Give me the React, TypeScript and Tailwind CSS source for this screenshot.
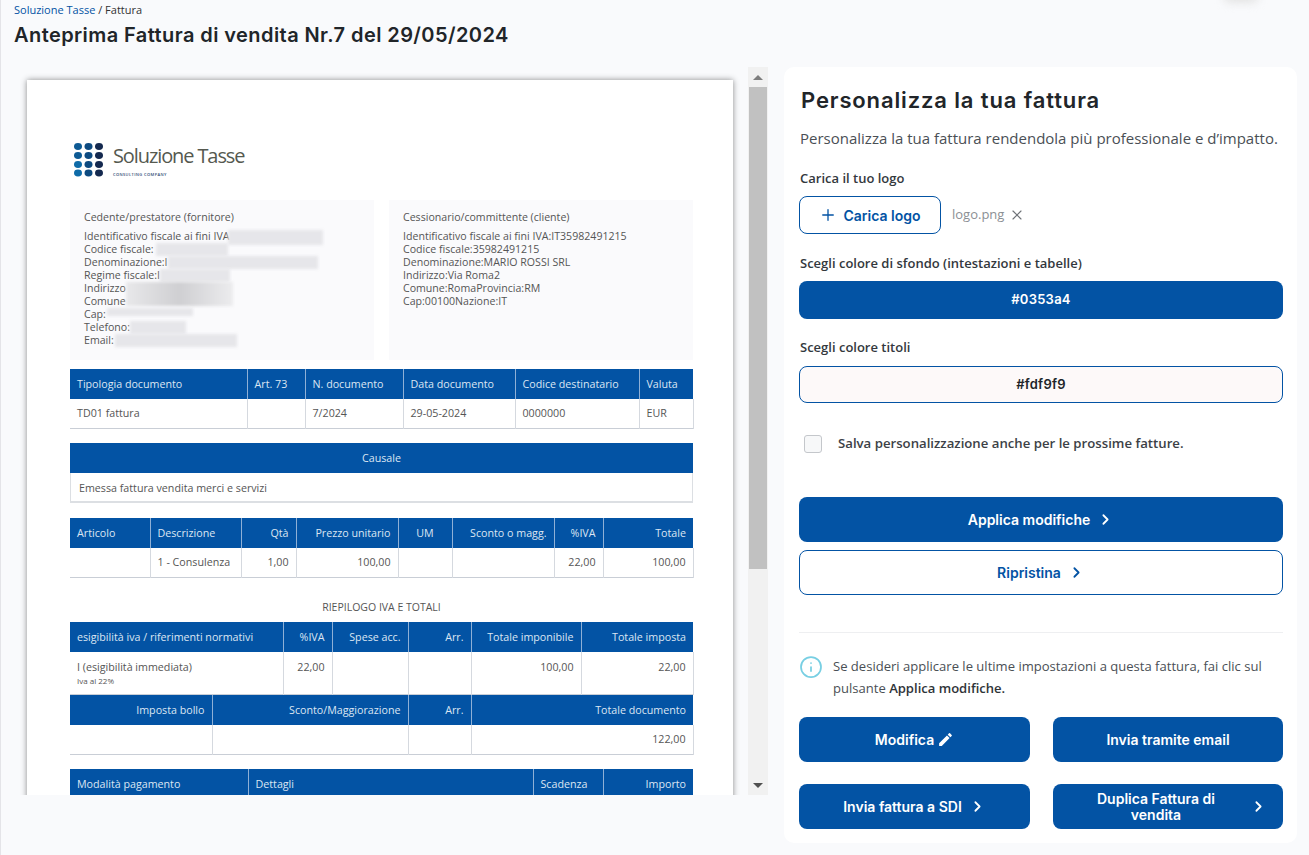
import React from "react";
import { ChevronRight, Plus, X, Info } from "lucide-react";
import { MdEdit } from "react-icons/md";

const sans = "font-['Open_Sans','Liberation_Sans',sans-serif]";
const head = "font-['Inter','Liberation_Sans',sans-serif]";

type Col = { w: number; label: string; cell?: React.ReactNode; right?: boolean; center?: boolean };

function DocTable({ cols, h = 29, extra = false }: { cols: Col[]; h?: number; extra?: boolean }) {
  return (
    <table className="table-fixed border-collapse w-[623px] text-[10.7px] leading-[13px]">
      <colgroup>
        {cols.map((c, i) => (
          <col key={i} style={{ width: c.w }} />
        ))}
      </colgroup>
      <thead>
        <tr className="h-[30px] bg-[#0353a4] text-[#dce6f3]">
          {cols.map((c, i) => (
            <th
              key={i}
              className={`px-[7px] pt-[1px] font-normal whitespace-nowrap border-l border-l-[#8fb0d6] first:border-l-0 ${
                c.right ? "text-right" : c.center ? "text-center" : "text-left"
              }`}
            >
              {c.label}
            </th>
          ))}
        </tr>
      </thead>
      <tbody>
        <tr className="border-b border-b-[#c9ced6] text-[#555]" style={{ height: h }}>
          {cols.map((c, i) => (
            <td
              key={i}
              className={`px-[7px] whitespace-nowrap border-l border-l-[#d5d9df] first:border-l-0 last:border-r last:border-r-[#d5d9df] ${
                extra ? "align-top pt-[9px]" : "pt-[1px]"
              } ${c.right ? "text-right" : "text-left"}`}
            >
              {c.cell}
            </td>
          ))}
        </tr>
      </tbody>
    </table>
  );
}

function Blur({ w, h = 13, shift = 0 }: { w: number; h?: number; shift?: number }) {
  return (
    <span
      className="inline-block align-top bg-[#e6e6ea] blur-[1.5px]"
      style={{ width: w, height: h, marginLeft: shift }}
    />
  );
}

function Dots() {
  const colors = ["#0d5a94", "#0d4a80", "#14294f"];
  const ys = [147, 157, 167, 175];
  return (
    <svg width="32" height="34" viewBox="72 143 32 34" className="shrink-0">
      {ys.map((y, r) =>
        [77, 87.5, 98].map((x, c) => (
          <ellipse
            key={`${r}-${c}`}
            cx={x}
            cy={r === 3 ? 173 : 146.5 + r * 9}
            rx="4"
            ry="3.4"
            fill={r > 1 && c === 0 ? "#0e6ba8" : colors[c]}
          />
        ))
      )}
    </svg>
  );
}

function Btn({
  children,
  outline,
  className = "",
}: {
  children: React.ReactNode;
  outline?: boolean;
  className?: string;
}) {
  return (
    <button
      className={`${head} flex items-center justify-center h-[45px] rounded-[8px] text-[14px] font-semibold ${
        outline ? "bg-white border border-[#0353a4] text-[#0353a4]" : "bg-[#0353a4] text-white"
      } ${className}`}
    >
      {children}
    </button>
  );
}

export default function App() {
  return (
    <div className={`${sans} relative h-[855px] w-[1309px] overflow-hidden bg-[#f9fafc] border-l border-l-[#e4e4e8] text-[#212529]`}>
      <div className="absolute left-[1222px] top-[-12px] h-[15px] w-[36px] rounded-full bg-[#e4e4e4] blur-[4px]" />
      <header className="h-[67px] pl-[13px] pt-[2px]">
        <div className="text-[11px] leading-[15px] text-[#333]">
          <span className="text-[#0353a4]">Soluzione Tasse</span> / Fattura
        </div>
        <h1 className={`${head} mt-[5px] text-[20px] leading-[26px] font-[580] tracking-[0.42px] text-[#212529]`}>
          Anteprima Fattura di vendita Nr.7 del 29/05/2024
        </h1>
      </header>

      <div className="flex items-start">
        <section className="flex w-[767px] h-[728px] overflow-hidden">
          <div className="w-[747px] overflow-hidden pl-[26px] pt-[13px] pr-[14px]">
            <div className="w-[706px] h-[900px] bg-white shadow-[0_0_6px_rgba(0,0,0,0.45)] pl-[43px] pt-[63px] pr-[40px]">
              <div className="flex items-center ml-[3px] h-[34px]">
                <Dots />
                <div className="ml-[8px] -mt-[8px] relative">
                  <div className={`${sans} text-[20px] leading-[24px] tracking-[-1.1px] text-[#55594f] font-normal whitespace-nowrap`}>
                    Soluzione Tasse
                  </div>
                  <div className="absolute left-0 top-[28px] text-[4px] leading-[5px] tracking-[0.4px] text-[#2a4670] font-semibold whitespace-nowrap">
                    CONSULTING COMPANY
                  </div>
                </div>
              </div>

              <div className="flex gap-[15px] mt-[23px] h-[160px] text-[10.6px] leading-[13px] text-[#555]">
                <div className="w-[304px] bg-[#fafafc] pl-[14px] pt-[11px]">
                  <div className="mb-[6px]">Cedente/prestatore (fornitore)</div>
                  <div className="whitespace-nowrap h-[13px]">Identificativo fiscale ai fini IVA<Blur w={95} h={15} shift={-1} /></div>
                  <div className="whitespace-nowrap h-[13px]">Codice fiscale:<Blur w={72} shift={2} /></div>
                  <div className="whitespace-nowrap h-[13px]">Denominazione:I<Blur w={150} /></div>
                  <div className="whitespace-nowrap h-[13px]">Regime fiscale:I<Blur w={70} /></div>
                  <div className="whitespace-nowrap h-[13px]">
                    Indirizzo
                    <span className="inline-block align-top w-[107px] h-[24px] bg-gradient-to-r from-[#e8e8ea] via-[#cfcfd2] to-[#ececee] blur-[1.5px]" />
                  </div>
                  <div className="whitespace-nowrap h-[13px]">Comune</div>
                  <div className="whitespace-nowrap h-[13px]">Cap:<Blur w={86} h={8} shift={1} /></div>
                  <div className="whitespace-nowrap h-[13px]">Telefono:<Blur w={56} /></div>
                  <div className="whitespace-nowrap h-[13px]">Email:<Blur w={122} shift={1} /></div>
                </div>
                <div className="w-[304px] bg-[#fafafc] pl-[14px] pt-[11px]">
                  <div className="mb-[6px]">Cessionario/committente (cliente)</div>
                  <div>Identificativo fiscale ai fini IVA:IT35982491215</div>
                  <div>Codice fiscale:35982491215</div>
                  <div>Denominazione:MARIO ROSSI SRL</div>
                  <div>Indirizzo:Via Roma2</div>
                  <div>Comune:RomaProvincia:RM</div>
                  <div>Cap:00100Nazione:IT</div>
                </div>
              </div>

              <div className="mt-[9px]">
                <DocTable
                  cols={[
                    { w: 177, label: "Tipologia documento", cell: "TD01 fattura" },
                    { w: 58, label: "Art. 73" },
                    { w: 98, label: "N. documento", cell: "7/2024" },
                    { w: 112, label: "Data documento", cell: "29-05-2024" },
                    { w: 124, label: "Codice destinatario", cell: "0000000" },
                    { w: 54, label: "Valuta", cell: "EUR" },
                  ]}
                />
              </div>

              <div className="mt-[14px] w-[623px] text-[10.7px] leading-[13px]">
                <div className="h-[30px] pt-[2px] bg-[#0353a4] text-[#dce6f3] flex items-center justify-center">Causale</div>
                <div className="h-[30px] flex items-center pl-[8px] pt-[3px] text-[#555] border-x border-b-2 border-[#dcdfe3]">
                  Emessa fattura vendita merci e servizi
                </div>
              </div>

              <div className="mt-[15px]">
                <DocTable
                  h={30}
                  cols={[
                    { w: 80, label: "Articolo" },
                    { w: 91, label: "Descrizione", cell: "1 - Consulenza" },
                    { w: 55, label: "Qtà", cell: "1,00", right: true },
                    { w: 102, label: "Prezzo unitario", cell: "100,00", right: true },
                    { w: 54, label: "UM", center: true },
                    { w: 102, label: "Sconto o magg.", right: true },
                    { w: 49, label: "%IVA", cell: "22,00", right: true },
                    { w: 90, label: "Totale", cell: "100,00", right: true },
                  ]}
                />
              </div>

              <div className="w-[623px] h-[44px] pt-[22px] text-center text-[10.5px] leading-[14px] text-[#555]">
                RIEPILOGO IVA E TOTALI
              </div>

              <DocTable
                h={42}
                extra
                cols={[
                  {
                    w: 213,
                    label: "esigibilità iva / riferimenti normativi",
                    cell: (
                      <>
                        <div>I (esigibilità immediata)</div>
                        <div className="text-[8px] leading-[12px] mt-[1px]">Iva al 22%</div>
                      </>
                    ),
                  },
                  { w: 49, label: "%IVA", cell: "22,00", right: true },
                  { w: 76, label: "Spese acc.", right: true },
                  { w: 63, label: "Arr.", right: true },
                  { w: 110, label: "Totale imponibile", cell: "100,00", right: true },
                  { w: 112, label: "Totale imposta", cell: "22,00", right: true },
                ]}
              />
              <DocTable
                h={30}
                cols={[
                  { w: 142, label: "Imposta bollo", right: true },
                  { w: 196, label: "Sconto/Maggiorazione", right: true },
                  { w: 63, label: "Arr.", right: true },
                  { w: 222, label: "Totale documento", cell: "122,00", right: true },
                ]}
              />

              <div className="mt-[14px]">
                <DocTable
                  cols={[
                    { w: 178, label: "Modalità pagamento" },
                    { w: 285, label: "Dettagli" },
                    { w: 70, label: "Scadenza" },
                    { w: 90, label: "Importo", right: true },
                  ]}
                />
              </div>
            </div>
          </div>

          <div className="w-[20px] h-full bg-[#f1f1f1] flex flex-col items-center">
            <div className="h-[20px] flex items-center justify-center">
              <div className="w-0 h-0 border-x-[5px] border-x-transparent border-b-[5px] border-b-[#7d7d7d]" />
            </div>
            <div className="w-[18px] h-[482px] bg-[#c1c1c1]" />
            <div className="flex-1" />
            <div className="h-[20px] flex items-center justify-center">
              <div className="w-0 h-0 border-x-[5px] border-x-transparent border-t-[5px] border-t-[#505050]" />
            </div>
          </div>
        </section>

        <aside className="ml-[16px] w-[513px] h-[776px] bg-white rounded-[10px] pl-[15px] pr-[14px] pt-[18px]">
          <h2 className={`${head} pl-[2px] text-[22px] leading-[30px] font-[580] tracking-[0.87px] text-[#212529]`}>
            Personalizza la tua fattura
          </h2>
          <p className="pl-[1px] mt-[12px] text-[15px] leading-[22px] text-[#4a4f55] whitespace-nowrap">
            Personalizza la tua fattura rendendola più professionale e d’impatto.
          </p>

          <div className="pl-[1px] mt-[20px] text-[13px] leading-[18px] font-semibold text-[#33383d]">Carica il tuo logo</div>
          <div className="flex items-center mt-[9px]">
            <button className={`${head} flex items-center justify-center gap-[6px] w-[142px] h-[38px] rounded-[8px] border border-[#0353a4] bg-white text-[#0353a4] text-[14px] font-semibold`}>
              <Plus size={18} strokeWidth={1.75} />
              Carica logo
            </button>
            <span className="ml-[11px] text-[13px] text-[#8b8f94]">logo.png</span>
            <X size={16} strokeWidth={1.75} className="ml-[5px] text-[#6f7378]" />
          </div>

          <div className="pl-[1px] mt-[20px] text-[13px] leading-[18px] font-semibold text-[#33383d]">
            Scegli colore di sfondo (intestazioni e tabelle)
          </div>
          <div className={`${head} mt-[9px] h-[38px] rounded-[8px] bg-[#0353a4] text-white text-[13px] tracking-[0.25px] font-semibold flex items-center justify-center`}>
            #0353a4
          </div>

          <div className="pl-[1px] mt-[19px] text-[13px] leading-[18px] font-semibold text-[#33383d]">Scegli colore titoli</div>
          <div className={`${head} mt-[10px] h-[37px] rounded-[8px] bg-[#fdf9f9] border border-[#0353a4] text-[#212529] text-[13px] tracking-[0.25px] font-semibold flex items-center justify-center`}>
            #fdf9f9
          </div>

          <label className="flex items-center mt-[32px] ml-[5px] h-[18px]">
            <span className="w-[18px] h-[18px] rounded-[3px] border border-[#c4c7cb] bg-[#f7f8f9]" />
            <span className="ml-[16px] text-[13.2px] font-semibold text-[#3c4146]">
              Salva personalizzazione anche per le prossime fatture.
            </span>
          </label>

          <Btn className="w-full mt-[44px]">
            Applica modifiche
            <ChevronRight size={17} strokeWidth={2.5} className="ml-[7px]" />
          </Btn>
          <Btn outline className="w-full mt-[8px]">
            Ripristina
            <ChevronRight size={17} strokeWidth={2.5} className="ml-[7px]" />
          </Btn>

          <div className="mt-[37px] border-t border-t-[#eeeff1]" />

          <div className="flex mt-[22px] text-[13.05px] leading-[22px] text-[#4a4f55]">
            <Info size={24} strokeWidth={1.75} className="shrink-0 text-[#78cfe3]" />
            <p className="ml-[10px] w-[445px]">
              Se desideri applicare le ultime impostazioni a questa fattura, fai clic sul pulsante{" "}
              <span className="font-semibold text-[#2f3438]">Applica modifiche.</span>
            </p>
          </div>

          <div className="grid grid-cols-[231px_230px] gap-x-[23px] gap-y-[22px] mt-[18px]">
            <Btn>
              Modifica
              <MdEdit size={17} className="ml-[3px]" />
            </Btn>
            <Btn>Invia tramite email</Btn>
            <Btn>
              Invia fattura a SDI
              <ChevronRight size={17} strokeWidth={2.5} className="ml-[7px]" />
            </Btn>
            <Btn className="pl-[35px] pr-[16px] leading-[16px]">
              <span className="flex-1 text-center">Duplica Fattura di vendita</span>
              <ChevronRight size={17} strokeWidth={2.5} className="ml-[26px] shrink-0" />
            </Btn>
          </div>
        </aside>
      </div>
    </div>
  );
}
